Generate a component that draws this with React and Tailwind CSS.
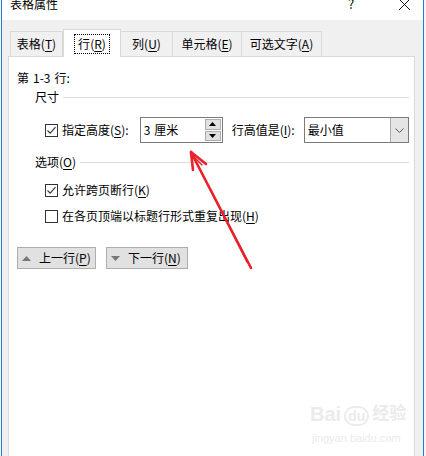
import React from "react";

const font = { fontFamily: '"Microsoft YaHei UI", "Noto Sans CJK SC", "Noto Sans", sans-serif' };

function Key({ children }) {
  return <span className="underline underline-offset-2">{children}</span>;
}

function Tab({ label, k, w, selected, first }) {
  if (selected) {
    return (
      <div className={`relative z-10 -mb-px h-[28px] ${w} bg-white border-x border-t border-[#d9d9d9] flex items-center justify-center`}>
        <div className="border border-dotted border-black px-[3px] h-[20px] flex items-center">
          {label}(<Key>{k}</Key>)
        </div>
      </div>
    );
  }
  return (
    <div className={`h-[25px] ${w} border-t border-r ${first ? "border-l" : ""} border-[#d9d9d9] bg-[#f0f0f0] flex items-center justify-center`}>
      {label}(<Key>{k}</Key>)
    </div>
  );
}

function CheckBox({ checked }) {
  return (
    <div className="w-[13px] h-[13px] border border-[#333] bg-white flex items-center justify-center shrink-0">
      {checked && (
        <svg width="11" height="11" viewBox="0 0 11 11">
          <path d="M1.5 5.5 L4.2 8.2 L9.5 2.2" fill="none" stroke="#333" strokeWidth="1.1" />
        </svg>
      )}
    </div>
  );
}

function SectionHead({ children }) {
  return (
    <div className="flex items-center pl-[18px] h-4">
      <span>{children}</span>
      <div className="flex-1 ml-1 h-px bg-[#dcdcdc]" />
    </div>
  );
}

export default function App() {
  return (
    <div className="w-[426px] h-[456px] overflow-hidden bg-[#f4f4f4] flex text-[12px] leading-4 text-black" style={font}>
      <div className="ml-px w-[423px] h-full border-x border-[#2a7ad5] flex flex-col relative">
        {/* title bar */}
        <div className="h-[20px] bg-white flex items-start shrink-0">
          <div className="-mt-1 ml-[8px] flex-1">表格属性</div>
          <div className="-mt-1 w-[12px] text-[13px]">?</div>
          <svg className="ml-[38px] mr-[12px]" width="13" height="11" viewBox="0 0 13 11">
            <path d="M1 -1 L12 10 M12 -1 L1 10" stroke="#111" strokeWidth="1" fill="none" />
          </svg>
        </div>

        {/* body */}
        <div className="flex-1 bg-[#f0f0f0] pl-[6px] pr-[8px] pt-[9px] flex flex-col">
          <div className="flex items-end h-[27px] pl-[2px]">
            <Tab label="表格" k="T" w="w-[53px]" first />
            <Tab label="行" k="R" w="w-[58px]" selected />
            <Tab label="列" k="U" w="w-[52px]" />
            <Tab label="单元格" k="E" w="w-[69px]" />
            <Tab label="可选文字" k="A" w="w-[80px]" />
          </div>

          <div className="flex-1 bg-white border-x border-t border-[#d9d9d9] pl-[8px] pr-[5px] pt-[13px] flex flex-col">
            <div className="flex gap-[4px]">
              <span>第</span>
              <span>1-3</span>
              <span>行:</span>
            </div>

            <div className="mt-[3px]">
              <SectionHead>尺寸</SectionHead>
            </div>

            <div className="mt-[12px] flex items-center pl-[28px] h-[26px]">
              <CheckBox checked />
              <span className="ml-[4px]">指定高度(<Key>S</Key>):</span>
              <div className="ml-[11px] w-[83px] h-[26px] border border-[#7a7a7a] flex items-center">
                <span className="flex-1 pl-[3px] flex gap-[4px]">
                  <span>3</span>
                  <span>厘米</span>
                </span>
                <div className="w-[16px] h-[22px] mr-px flex flex-col gap-px">
                  <div className="flex-1 bg-[#e1e1e1] border border-[#adadad] flex items-center justify-center">
                    <svg width="7" height="4" viewBox="0 0 7 4"><path d="M0 4 L3.5 0 L7 4 Z" fill="#000" /></svg>
                  </div>
                  <div className="flex-1 bg-[#e1e1e1] border border-[#adadad] flex items-center justify-center">
                    <svg width="7" height="4" viewBox="0 0 7 4"><path d="M0 0 L3.5 4 L7 0 Z" fill="#000" /></svg>
                  </div>
                </div>
              </div>
              <span className="ml-[9px]">行高值是(<Key>I</Key>):</span>
              <div className="ml-[9px] flex-1 h-[26px] border border-[#7a7a7a] flex items-stretch">
                <span className="flex-1 pl-[3px] flex items-center">最小值</span>
                <div className="w-[18px] bg-[#e5e5e5] border-l border-[#adadad] flex items-center justify-center">
                  <svg width="9" height="5" viewBox="0 0 9 5"><path d="M0.5 0.5 L4.5 4.5 L8.5 0.5" fill="none" stroke="#555" strokeWidth="1" /></svg>
                </div>
              </div>
            </div>

            <div className="mt-[11px]">
              <SectionHead>
                选项(<Key>O</Key>)
              </SectionHead>
            </div>

            <div className="mt-[12px] flex items-center pl-[28px] h-4">
              <CheckBox checked />
              <span className="ml-[4px]">允许跨页断行(<Key>K</Key>)</span>
            </div>
            <div className="mt-[10px] flex items-center pl-[28px] h-4">
              <CheckBox />
              <span className="ml-[4px]">在各页顶端以标题行形式重复出现(<Key>H</Key>)</span>
            </div>

            <div className="mt-[23px] flex gap-[10px]">
              <button className="w-[79px] h-[22px] bg-[#e1e1e1] border border-[#adadad] flex items-center pl-[4px]">
                <svg width="9" height="5" viewBox="0 0 9 5"><path d="M0 5 L4.5 0 L9 5 Z" fill="#777" /></svg>
                <span className="ml-[8px]">上一行(<Key>P</Key>)</span>
              </button>
              <button className="w-[82px] h-[22px] bg-[#e1e1e1] border border-[#adadad] flex items-center pl-[4px]">
                <svg width="9" height="5" viewBox="0 0 9 5"><path d="M0 0 L4.5 5 L9 0 Z" fill="#777" /></svg>
                <span className="ml-[8px]">下一行(<Key>N</Key>)</span>
              </button>
            </div>
          </div>
        </div>

        {/* red arrow annotation */}
        <svg className="absolute left-0 top-0 pointer-events-none" width="423" height="456" viewBox="1 0 423 456">
          <g stroke="#e8212a" strokeWidth="2.6" strokeLinecap="round" fill="none">
            <path d="M250 268 L192 156" />
            <path d="M246 262 L194 160" strokeWidth="1.5" />
            <path d="M190 152 L205 164" />
            <path d="M190 152 L192 170" />
            <path d="M193 157 L201 165" strokeWidth="1.5" />
          </g>
        </svg>

        {/* watermark */}
        <div className="absolute left-[308px] top-[402px] text-[#ebebeb] pointer-events-none select-none" style={{ fontFamily: '"Liberation Sans", "Noto Sans CJK SC", sans-serif' }}>
          <div className="flex items-end text-[20px] leading-6 font-bold">
            <span>Bai</span>
            <span className="ml-[3px] border-2 border-[#ebebeb] rounded-full px-[2px] text-[14px] leading-4">du</span>
            <span className="ml-[3px] text-[17px]">经验</span>
          </div>
          <div className="text-[11px] leading-4 mt-[4px] ml-[2px]">jingyan.baidu.com</div>
        </div>
      </div>
    </div>
  );
}
